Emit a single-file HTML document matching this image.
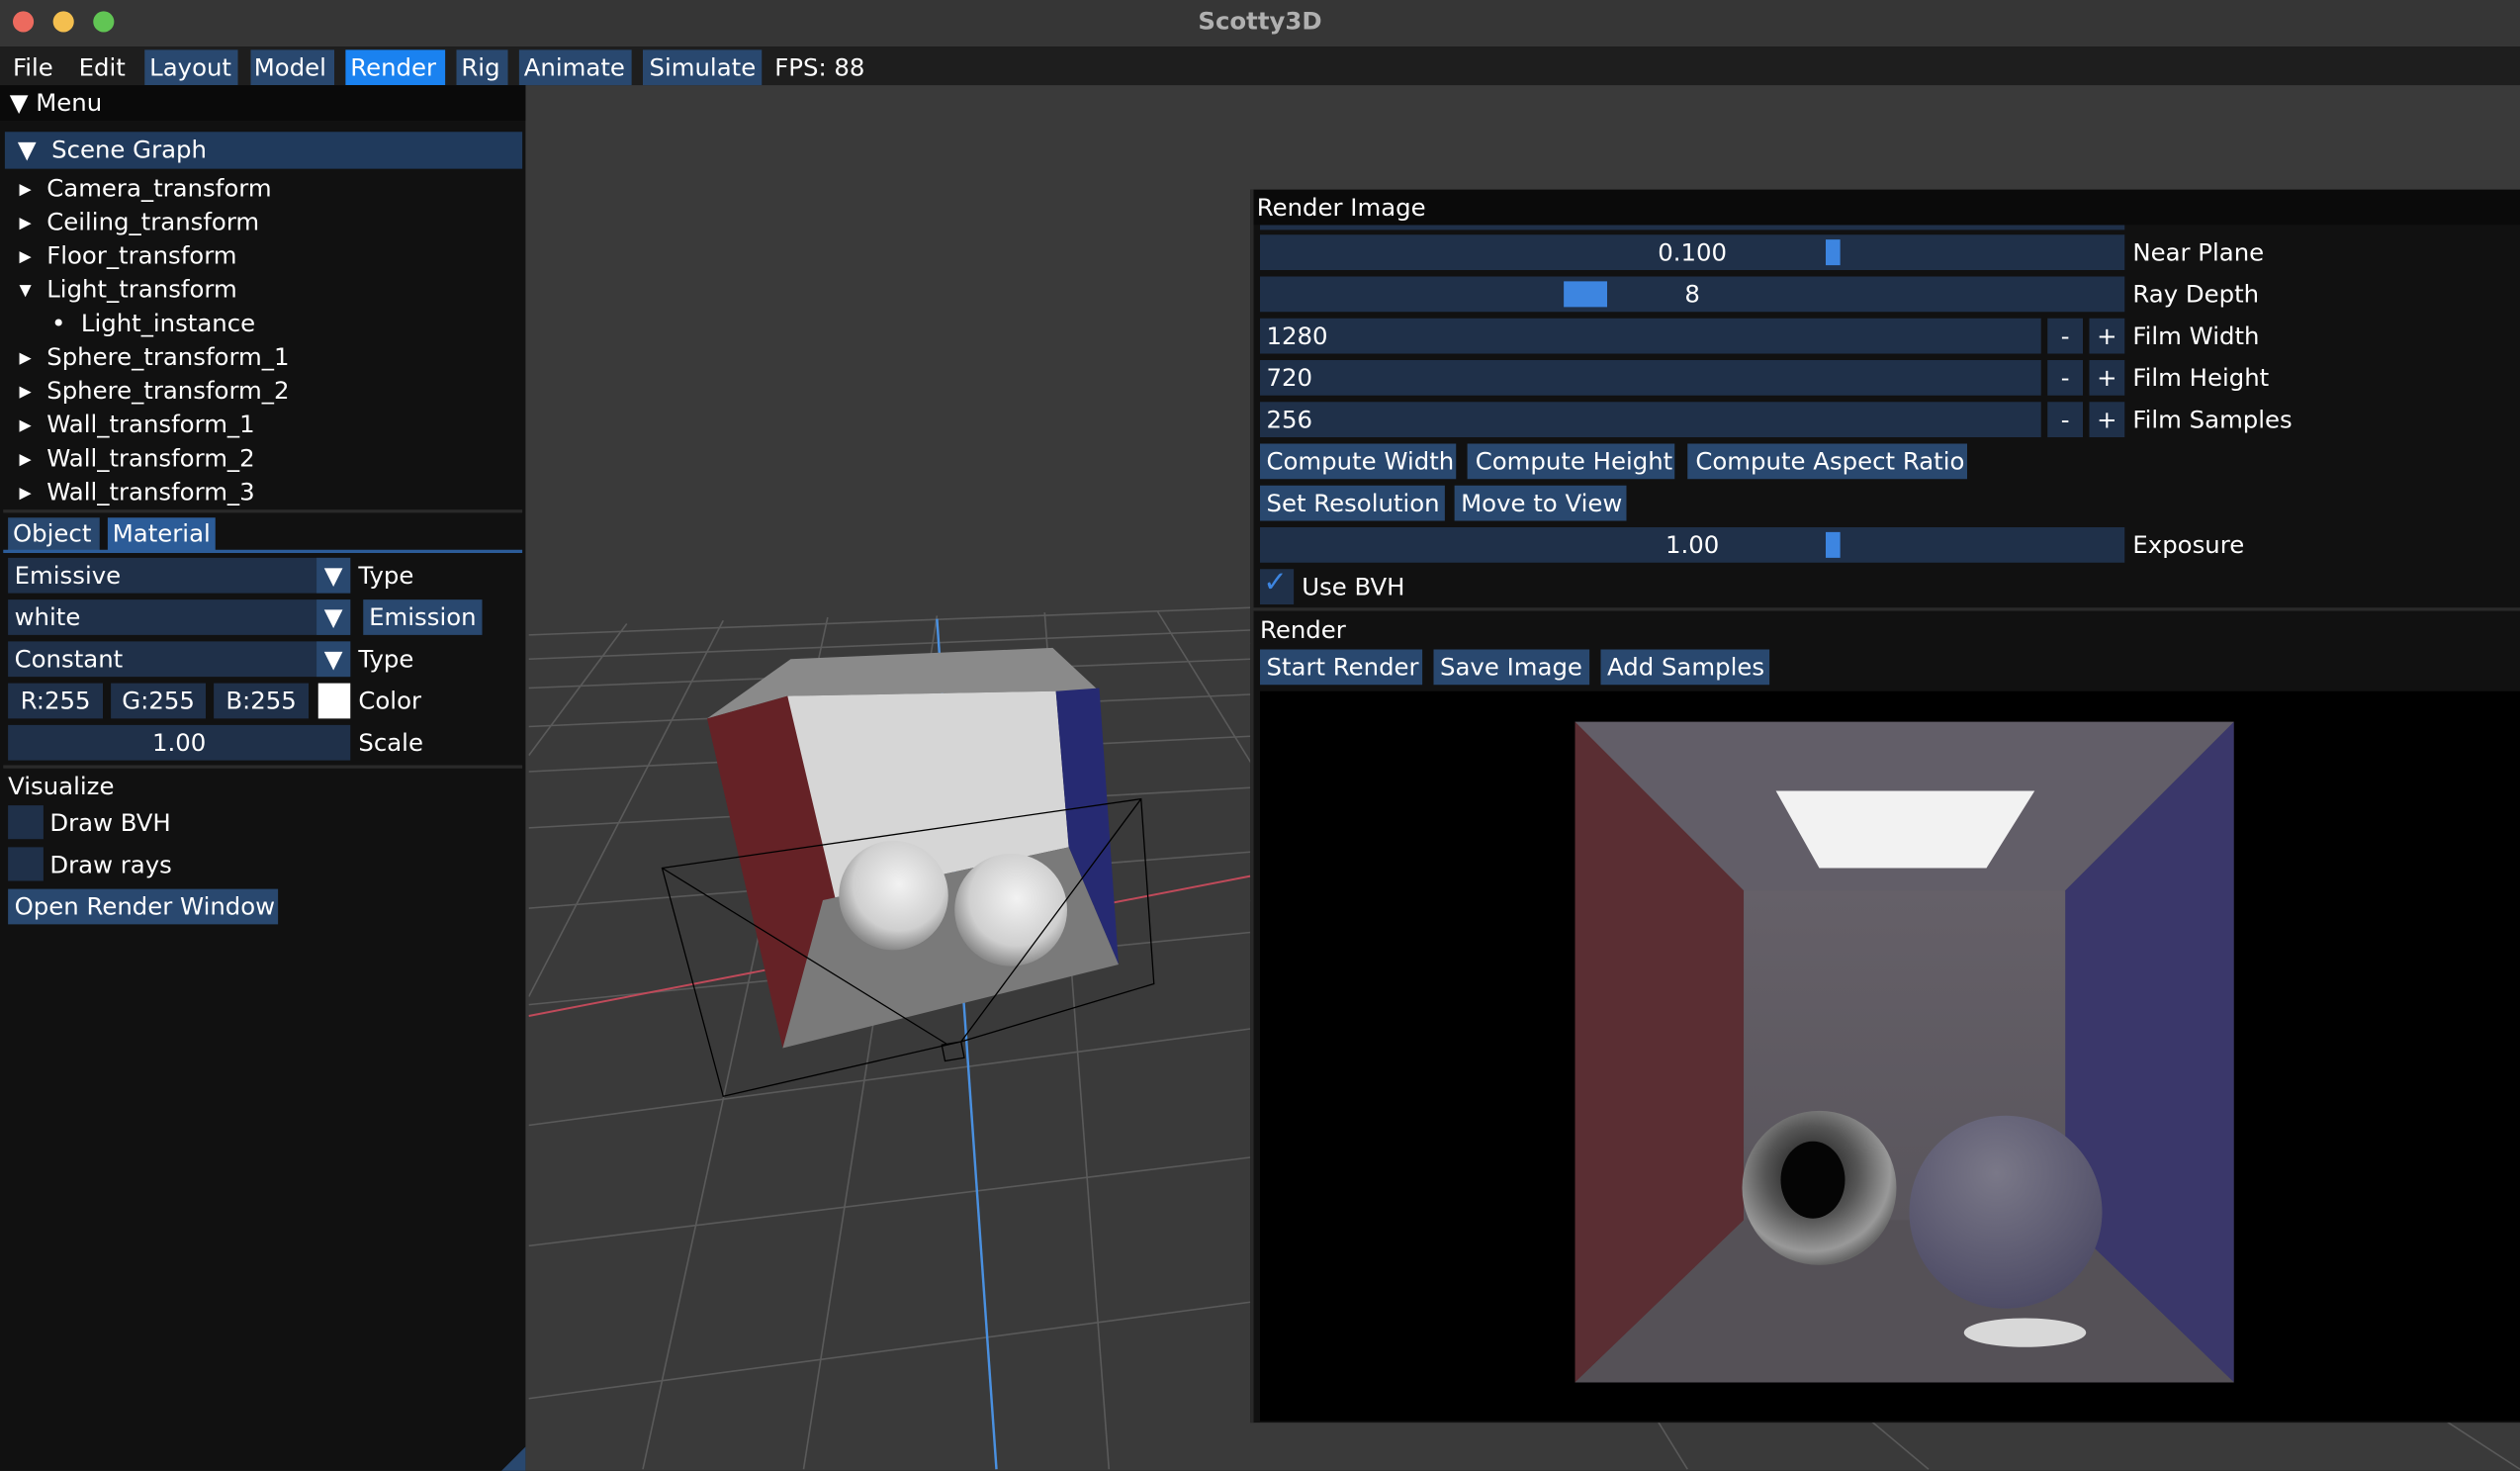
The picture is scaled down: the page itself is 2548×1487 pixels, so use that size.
<!DOCTYPE html>
<html><head><meta charset="utf-8"><style>
html,body{margin:0;padding:0;background:#111;overflow:hidden;width:2548px;height:1486px}
#w{position:absolute;left:0;top:0;width:1568px;height:915px;transform:scale(1.625);transform-origin:0 0;font-family:"DejaVu Sans","Liberation Sans",sans-serif;font-size:15px;color:#fff;background:#3a3a3a;overflow:hidden}
.a{position:absolute;box-sizing:border-box;white-space:nowrap}
.b{background:#29486f}
.f{background:#1f3049}
.t{line-height:22px}
</style></head><body><div id="w">
<div class="a" style="left:0;top:0;width:1568px;height:30px;background:#363636;border-bottom:1px solid #1a1a1a"></div>
<div class="a" style="left:8px;top:7px;width:13px;height:13px;border-radius:50%;background:#ec6a5e"></div>
<div class="a" style="left:33px;top:7px;width:13px;height:13px;border-radius:50%;background:#f4bf4f"></div>
<div class="a" style="left:58px;top:7px;width:13px;height:13px;border-radius:50%;background:#61c554"></div>
<div class="a" style="left:0;top:4px;width:1568px;text-align:center;color:#b0b0b0;font-weight:bold;font-size:15px">Scotty3D</div>
<div class="a" style="left:0;top:30px;width:1568px;height:23px;background:#1e1e1e"></div>
<div class="a t" style="left:8px;top:31px">File</div>
<div class="a t" style="left:49px;top:31px">Edit</div>
<div class="a t b" style="left:90px;top:31px;width:58px;padding-left:3px">Layout</div>
<div class="a t b" style="left:156px;top:31px;width:52px;padding-left:2px">Model</div>
<div class="a t" style="left:215px;top:31px;width:62px;padding-left:3px;background:#1a82f0">Render</div>
<div class="a t b" style="left:284px;top:31px;width:32px;padding-left:3px">Rig</div>
<div class="a t b" style="left:323px;top:31px;width:70px;padding-left:3px">Animate</div>
<div class="a t b" style="left:400px;top:31px;width:74px;padding-left:4px">Simulate</div>
<div class="a t" style="left:482px;top:31px">FPS: 88</div>
<div class="a" style="left:0;top:53px;width:327px;height:862px;background:#111"></div>
<div class="a t" style="left:0;top:53px;width:327px;height:22px;background:#0a0a0a;padding-left:6px">▼ Menu</div>
<div class="a t" style="left:3px;top:82px;width:322px;height:23px;background:#203a5c;padding-left:8px">▼&nbsp; Scene Graph</div>
<div class="a" style="left:12px;top:107px;line-height:21px">
<div>▸&nbsp; Camera_transform</div><div>▸&nbsp; Ceiling_transform</div><div>▸&nbsp; Floor_transform</div><div>▾&nbsp; Light_transform</div><div style="padding-left:20px">•&nbsp; Light_instance</div><div>▸&nbsp; Sphere_transform_1</div><div>▸&nbsp; Sphere_transform_2</div><div>▸&nbsp; Wall_transform_1</div><div>▸&nbsp; Wall_transform_2</div><div>▸&nbsp; Wall_transform_3</div></div>
<div class="a" style="left:2px;top:317px;width:323px;height:2px;background:#2a2a2a"></div>
<div class="a t b" style="left:5px;top:322px;width:57px;height:21px;line-height:21px;padding-left:3px">Object</div>
<div class="a t" style="left:67px;top:322px;width:67px;height:21px;line-height:21px;padding-left:3px;background:#2c5c98">Material</div>
<div class="a" style="left:2px;top:342px;width:323px;height:2px;background:#2c5c98"></div>
<div class="a t f" style="left:5px;top:347px;width:213px;padding-left:4px">Emissive</div><div class="a t b" style="left:197px;top:347px;width:21px;text-align:center">▼</div><div class="a t" style="left:223px;top:347px">Type</div>
<div class="a t f" style="left:5px;top:373px;width:213px;padding-left:4px">white</div><div class="a t b" style="left:197px;top:373px;width:21px;text-align:center">▼</div><div class="a t b" style="left:226px;top:373px;width:74px;text-align:center">Emission</div>
<div class="a t f" style="left:5px;top:399px;width:213px;padding-left:4px">Constant</div><div class="a t b" style="left:197px;top:399px;width:21px;text-align:center">▼</div><div class="a t" style="left:223px;top:399px">Type</div>
<div class="a t f" style="left:5px;top:425px;width:59px;text-align:center">R:255</div><div class="a t f" style="left:69px;top:425px;width:59px;text-align:center">G:255</div><div class="a t f" style="left:133px;top:425px;width:59px;text-align:center">B:255</div>
<div class="a" style="left:198px;top:425px;width:20px;height:22px;background:#fff"></div><div class="a t" style="left:223px;top:425px">Color</div>
<div class="a t f" style="left:5px;top:451px;width:213px;text-align:center">1.00</div><div class="a t" style="left:223px;top:451px">Scale</div>
<div class="a" style="left:2px;top:476px;width:323px;height:2px;background:#2a2a2a"></div>
<div class="a t" style="left:5px;top:478px">Visualize</div>
<div class="a f" style="left:5px;top:501px;width:22px;height:21px"></div><div class="a t" style="left:31px;top:501px">Draw BVH</div>
<div class="a f" style="left:5px;top:527px;width:22px;height:21px"></div><div class="a t" style="left:31px;top:527px">Draw rays</div>
<div class="a t b" style="left:5px;top:553px;width:168px;padding-left:4px">Open Render Window</div>
<svg class="a" style="left:329px;top:53px" width="1239" height="862" viewBox="329 53 1239 862">
<g stroke="#5a5a5a" stroke-width="1" fill="none">
<path d="M329 395 L778 378 M329 410 L778 392 M329 428 L778 410 M329 452 L778 432 M329 480 L778 458 M329 515 L778 490 M329 565 L778 530 M329 625 L778 580 M329 700 L778 640 M329 775 L778 720 M329 870 L778 810"/>
<path d="M390 388 L329 470 M450 386 L329 620 M515 384 L400 914 M583 383 L500 914 M650 381 L690 914 M720 380 L1050 914 M778 400 L1568 914 M778 560 L1200 914"/>
</g>
<path d="M329 632 L778 545" stroke="#c04a5a" stroke-width="1.2"/>
<path d="M583 385 L620 914" stroke="#4a90e0" stroke-width="1.5"/>
<polygon points="440,447 492,410 655,403 684,430 657,430 490,433" fill="#8a8a8a"/>
<polygon points="490,433 657,430 665,527 512,560" fill="#d6d6d6"/>
<polygon points="440,447 490,433 520,560 487,652" fill="#652226"/>
<polygon points="657,430 684,428 696,600 665,527" fill="#262a72"/>
<polygon points="512,560 665,527 696,600 487,652" fill="#7a7a7a"/>
<defs><radialGradient id="s" cx="0.55" cy="0.4" r="0.6"><stop offset="0" stop-color="#f2f2f2"/><stop offset="0.7" stop-color="#cfcfcf"/><stop offset="1" stop-color="#8a8a8a"/></radialGradient></defs>
<circle cx="556" cy="557" r="34" fill="url(#s)"/><circle cx="629" cy="566" r="35" fill="url(#s)"/>
<g stroke="#000" stroke-width="0.8" fill="none">
<path d="M412 540 L710 497 L718 612 L598 648 L450 682 Z M412 540 L590 650 M710 497 L598 648 M586 650 L598 648 L600 658 L588 660 Z"/>
</g>
</svg>
<div class="a" style="left:778px;top:118px;width:790px;height:767px;background:#111;border-left:2px solid #2a2a2a"></div>
<div class="a t" style="left:780px;top:118px;width:788px;height:22px;background:#0a0a0a;padding-left:2px">Render Image</div>
<div class="a f" style="left:784px;top:140px;width:538px;height:3px"></div>
<div class="a t f" style="left:784px;top:146px;width:538px;text-align:center">0.100</div><div class="a" style="left:1136px;top:149px;width:9px;height:16px;background:#3d85e0"></div><div class="a t" style="left:1327px;top:146px">Near Plane</div>
<div class="a t f" style="left:784px;top:172px;width:538px;text-align:center">8</div><div class="a" style="left:973px;top:175px;width:27px;height:16px;background:#3d85e0"></div><div class="a t" style="left:1327px;top:172px">Ray Depth</div>
<div class="a t f" style="left:784px;top:198px;width:486px;padding-left:4px">1280</div><div class="a t f" style="left:1274px;top:198px;width:22px;text-align:center">-</div><div class="a t f" style="left:1300px;top:198px;width:22px;text-align:center">+</div><div class="a t" style="left:1327px;top:198px">Film Width</div>
<div class="a t f" style="left:784px;top:224px;width:486px;padding-left:4px">720</div><div class="a t f" style="left:1274px;top:224px;width:22px;text-align:center">-</div><div class="a t f" style="left:1300px;top:224px;width:22px;text-align:center">+</div><div class="a t" style="left:1327px;top:224px">Film Height</div>
<div class="a t f" style="left:784px;top:250px;width:486px;padding-left:4px">256</div><div class="a t f" style="left:1274px;top:250px;width:22px;text-align:center">-</div><div class="a t f" style="left:1300px;top:250px;width:22px;text-align:center">+</div><div class="a t" style="left:1327px;top:250px">Film Samples</div>
<div class="a t b" style="left:784px;top:276px;width:122px;padding-left:4px">Compute Width</div><div class="a t b" style="left:913px;top:276px;width:129px;padding-left:5px">Compute Height</div><div class="a t b" style="left:1050px;top:276px;width:174px;padding-left:5px">Compute Aspect Ratio</div>
<div class="a t b" style="left:784px;top:302px;width:115px;padding-left:4px">Set Resolution</div><div class="a t b" style="left:905px;top:302px;width:107px;padding-left:4px">Move to View</div>
<div class="a t f" style="left:784px;top:328px;width:538px;text-align:center">1.00</div><div class="a" style="left:1136px;top:331px;width:9px;height:16px;background:#3d85e0"></div><div class="a t" style="left:1327px;top:328px">Exposure</div>
<div class="a f" style="left:784px;top:354px;width:21px;height:22px"></div><div class="a" style="left:786px;top:352px;color:#3d85e0;font-size:18px">✓</div><div class="a t" style="left:810px;top:354px">Use BVH</div>
<div class="a" style="left:780px;top:378px;width:788px;height:2px;background:#2a2a2a"></div>
<div class="a t" style="left:784px;top:381px">Render</div>
<div class="a t b" style="left:784px;top:404px;width:101px;padding-left:4px">Start Render</div><div class="a t b" style="left:892px;top:404px;width:97px;padding-left:4px">Save Image</div><div class="a t b" style="left:996px;top:404px;width:105px;padding-left:4px">Add Samples</div>
<div class="a" style="left:784px;top:430px;width:784px;height:454px;background:#000"></div>
<svg class="a" style="left:980px;top:449px" width="410" height="411" viewBox="0 0 410 411">
<defs>
<linearGradient id="bw" x1="0" y1="0" x2="0" y2="1"><stop offset="0" stop-color="#656068"/><stop offset="1" stop-color="#59555c"/></linearGradient>
<radialGradient id="sp" cx="0.45" cy="0.3" r="0.7"><stop offset="0" stop-color="#7a7888"/><stop offset="1" stop-color="#4e4c66"/></radialGradient>
<radialGradient id="mr" cx="0.45" cy="0.4" r="0.6"><stop offset="0" stop-color="#111"/><stop offset="0.5" stop-color="#555"/><stop offset="0.85" stop-color="#999"/><stop offset="1" stop-color="#666"/></radialGradient>
</defs>
<rect width="410" height="411" fill="#5c585f"/>
<polygon points="0,0 410,0 305,105 105,105" fill="#625e68"/>
<polygon points="0,0 105,105 105,310 0,411" fill="#5a2e33"/>
<polygon points="410,0 410,411 305,310 305,105" fill="#3a376a"/>
<rect x="105" y="105" width="200" height="205" fill="url(#bw)"/>
<polygon points="105,310 305,310 410,411 0,411" fill="#555157"/>
<polygon points="125,43 286,43 256,91 152,91" fill="#f2f2f2"/>
<circle cx="152" cy="290" r="48" fill="url(#mr)"/>
<ellipse cx="148" cy="285" rx="20" ry="24" fill="#050505"/>
<ellipse cx="280" cy="380" rx="38" ry="9" fill="#d8d8d8"/>
<circle cx="268" cy="305" r="60" fill="url(#sp)"/>
</svg>
<div class="a" style="left:312px;top:900px;width:0;height:0;border-left:15px solid transparent;border-bottom:15px solid #29486f"></div>
</div></body></html>
